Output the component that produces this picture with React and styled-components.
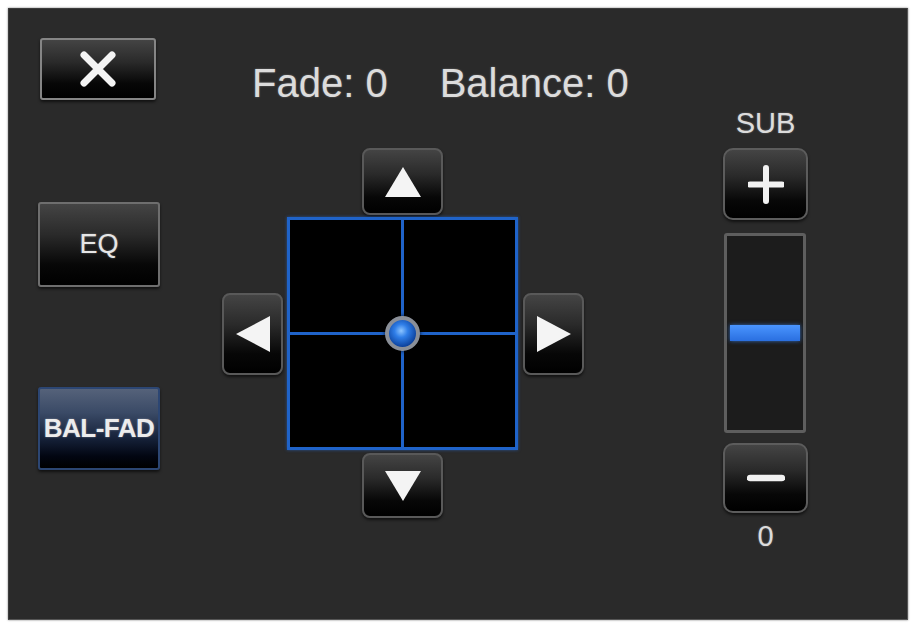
import React from 'react';
import styled, { createGlobalStyle, css } from 'styled-components';

const GlobalStyle = createGlobalStyle`
  html, body {
    margin: 0;
    padding: 0;
    background: #fff;
  }
  body {
    font-family: "Liberation Sans", Arial, sans-serif;
  }
`;

const Page = styled.div`
  padding: 8px 4px 3px 8px;
  width: 912px;
  height: 623px;
  box-sizing: border-box;
`;

const Panel = styled.div`
  width: 900px;
  height: 612px;
  box-sizing: border-box;
  background: #2a2a2a;
  border: 1px solid #3c3c3c;
  border-right-color: #555;
  border-bottom-color: #555;
  box-shadow: 0 0 2px rgba(0, 0, 0, 0.5);
  display: flex;
  padding: 29px 0 0 29px;
`;

const glossy = css`
  box-sizing: border-box;
  display: flex;
  align-items: center;
  justify-content: center;
  border: 2px solid #6e6e6e;
  background: linear-gradient(to bottom, #444 0%, #2a2a2a 38%, #070707 75%, #000 100%);
  box-shadow: 0 2px 3px rgba(0, 0, 0, 0.6);
  color: #e6e6e6;
  cursor: pointer;
  padding: 0;
`;

const LeftColumn = styled.div`
  width: 122px;
  display: flex;
  flex-direction: column;
  align-items: flex-start;
`;

const CloseButton = styled.button`
  ${glossy};
  width: 116px;
  height: 62px;
  margin-left: 2px;
  border-radius: 3px;
  border-color: #858585;
`;

const ModeButton = styled.button`
  ${glossy};
  width: 122px;
  height: 85px;
  margin-top: ${(p) => p.$top}px;
  border-radius: 3px;
  font-family: "Liberation Sans Narrow", "Liberation Sans", Arial, sans-serif;
  font-size: ${(p) => p.$size}px;
  text-shadow: 0 0 2px rgba(255, 255, 255, 0.4);
  ${(p) =>
    p.$active &&
    css`
      height: 83px;
      font-family: "Liberation Sans", Arial, sans-serif;
      letter-spacing: -0.5px;
      border-color: #2c4673;
      background: linear-gradient(to bottom, #55627a 0%, #3a4a66 30%, #16223a 62%, #020612 85%, #000 100%);
      color: #ececec;
      font-weight: bold;
    `}
`;

const CenterColumn = styled.div`
  width: 363px;
  margin-left: 62px;
  display: flex;
  flex-direction: column;
`;

const Title = styled.div`
  margin-top: 25px;
  padding-left: 30px;
  height: 40px;
  line-height: 40px;
  font-size: 40px;
  color: #dcdcdc;
  white-space: nowrap;
  display: flex;
  gap: 52px;
  text-shadow: 0 0 2px rgba(255, 255, 255, 0.35);
`;

const DPad = styled.div`
  margin-top: 45px;
  display: grid;
  grid-template-columns: 61px 231px 63px;
  grid-template-rows: 67px 233px 66px;
  gap: 2px 4px;
`;

const ArrowButton = styled.button`
  ${glossy};
  border-radius: 8px;
  border-color: #595959;
  grid-column: ${(p) => p.$col};
  grid-row: ${(p) => p.$row};
  width: ${(p) => (p.$wide ? 81 : 61)}px;
  height: ${(p) => p.$h || 82}px;
  justify-self: center;
  align-self: ${(p) => p.$align || 'center'};
`;

const Pad = styled.div`
  grid-column: 2;
  grid-row: 2;
  position: relative;
  box-sizing: border-box;
  background: #1f63c9;
  padding: 3px;
  display: grid;
  grid-template-columns: 1fr 1fr;
  grid-template-rows: 1fr 1fr;
  gap: 3px;
  box-shadow: 0 0 3px rgba(40, 110, 220, 0.6);
`;

const Cell = styled.div`
  background: #000;
`;

const Knob = styled.div`
  position: absolute;
  left: 50%;
  top: 50%;
  width: 35px;
  height: 35px;
  margin: -18px 0 0 -18px;
  border-radius: 50%;
  box-sizing: border-box;
  border: 4px solid #8a8f98;
  background: radial-gradient(circle at 45% 40%, #8cc4ff 0%, #2f7ee8 30%, #0b3f99 75%, #06224f 100%);
  box-shadow: 0 0 4px rgba(0, 0, 0, 0.8);
`;

const RightColumn = styled.div`
  width: 85px;
  margin-left: 138px;
  display: flex;
  flex-direction: column;
  align-items: center;
`;

const Label = styled.div`
  font-size: 29px;
  line-height: 30px;
  height: 30px;
  margin-top: ${(p) => p.$top}px;
  color: #dcdcdc;
  text-shadow: 0 0 2px rgba(255, 255, 255, 0.35);
`;

const SubButton = styled.button`
  ${glossy};
  width: 85px;
  height: ${(p) => p.$h}px;
  margin-top: 10px;
  border-radius: 10px;
  border-color: #5c5c5c;
`;

const Track = styled.div`
  width: 82px;
  height: 200px;
  margin-top: 13px;
  margin-right: 2px;
  box-sizing: border-box;
  border: 3px solid #5e5e5e;
  border-radius: 3px;
  background: #1c1c1c;
  display: flex;
  flex-direction: column;
  align-items: center;
`;

const Level = styled.div`
  width: 70px;
  height: 16px;
  background: linear-gradient(to bottom, #4a95ff, #2a6fe0);
  box-shadow: 0 0 4px rgba(60, 140, 255, 0.7);
`;

const Triangle = ({ dir }) => {
  const shapes = {
    up: '18,0 36,30 0,30',
    down: '0,0 36,0 18,30',
    left: '0,18 34,0 34,36',
    right: '0,0 34,18 0,36',
  };
  const vertical = dir === 'up' || dir === 'down';
  return (
    <svg width={vertical ? 36 : 34} height={vertical ? 30 : 36} viewBox={vertical ? '0 0 36 30' : '0 0 34 36'}>
      <polygon points={shapes[dir]} fill="#f4f4f4" />
    </svg>
  );
};

const XIcon = () => (
  <svg width="38" height="38" viewBox="0 0 38 38">
    <path d="M5 5 L33 33 M33 5 L5 33" stroke="#f4f4f4" strokeWidth="7" strokeLinecap="round" />
  </svg>
);

const PlusIcon = () => (
  <svg width="36" height="39" viewBox="0 0 36 39">
    <path d="M18 3 V36 M2 19.5 H34" stroke="#f2f2f2" strokeWidth="6" strokeLinecap="round" />
  </svg>
);

const MinusIcon = () => (
  <svg width="38" height="8" viewBox="0 0 38 8">
    <path d="M3 4 H35" stroke="#f2f2f2" strokeWidth="6.5" strokeLinecap="round" />
  </svg>
);

const App = () => {
  const fade = 0;
  const balance = 0;
  const sub = 0;

  return (
    <Page>
      <GlobalStyle />
      <Panel>
        <LeftColumn>
          <CloseButton aria-label="Close">
            <XIcon />
          </CloseButton>
          <ModeButton $top={102} $size={27}>EQ</ModeButton>
          <ModeButton $top={100} $size={26} $active>
            BAL-FAD
          </ModeButton>
        </LeftColumn>

        <CenterColumn>
          <Title>
            <span>Fade: {fade}</span>
            <span>Balance: {balance}</span>
          </Title>
          <DPad>
            <ArrowButton $col={2} $row={1} $wide $h={67} $align="end">
              <Triangle dir="up" />
            </ArrowButton>
            <ArrowButton $col={1} $row={2}>
              <Triangle dir="left" />
            </ArrowButton>
            <Pad>
              <Cell />
              <Cell />
              <Cell />
              <Cell />
              <Knob />
            </Pad>
            <ArrowButton $col={3} $row={2}>
              <Triangle dir="right" />
            </ArrowButton>
            <ArrowButton $col={2} $row={3} $wide $h={65} $align="end">
              <Triangle dir="down" />
            </ArrowButton>
          </DPad>
        </CenterColumn>

        <RightColumn>
          <Label $top={70}>SUB</Label>
          <SubButton $h={72}>
            <PlusIcon />
          </SubButton>
          <Track>
            <Level style={{ marginTop: 89 - sub * 10 }} />
          </Track>
          <SubButton $h={70}>
            <MinusIcon />
          </SubButton>
          <Label $top={8}>{sub}</Label>
        </RightColumn>
      </Panel>
    </Page>
  );
};

export default App;
